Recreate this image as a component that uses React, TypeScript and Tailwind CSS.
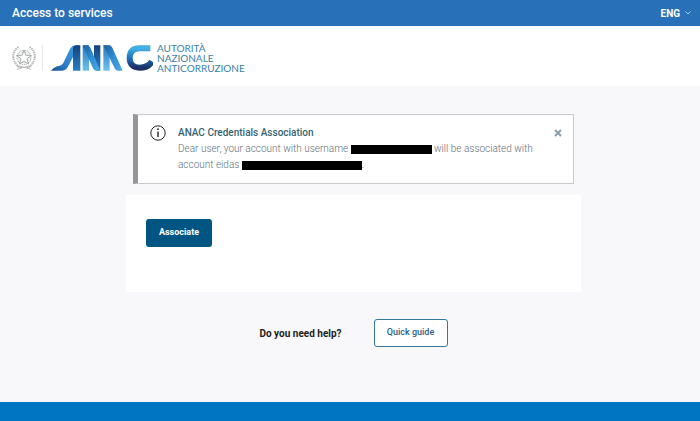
import React, { useState } from "react";

function Emblem() {
  return (
    <svg viewBox="0 0 48 52" className="h-[26px] w-6" fill="none" stroke="#b4b6b8" aria-hidden="true">
      <circle cx="24" cy="25" r="14" strokeWidth="2.5" strokeDasharray="2 1.4" />
      <circle cx="24" cy="25" r="10.5" strokeWidth="1" />
      <path
        d="M24 10l3.6 10.6 11.2.2-9 6.7 3.3 10.7-9.1-6.4-9.1 6.4 3.3-10.7-9-6.7 11.2-.2z"
        fill="#fff"
        stroke="#96999c"
        strokeWidth="1.6"
      />
      <path d="M13 4C3 10 0 21 4 31s9 12 15 15" strokeWidth="4" strokeDasharray="3 1.5" />
      <path d="M35 4c10 6 13 17 9 27s-9 12-15 15" strokeWidth="4" strokeDasharray="3 1.5" />
      <path d="M10 43c8 0 20 2 28 6M38 43c-8 0-20 2-28 6" strokeWidth="2" />
    </svg>
  );
}

// folded ribbon mark
function Ribbon() {
  return (
    <svg viewBox="0 0 306 78" className="h-[26px] w-[102px]" fill="none" role="img" aria-label="ANAC">
      <defs>
        <linearGradient id="sky" x1="0" y1="0" x2="0" y2="1">
          <stop offset="0" stopColor="#2a78bd" />
          <stop offset="1" stopColor="#6cc2f0" />
        </linearGradient>
        <linearGradient id="deep" x1="0" y1="0" x2="0" y2="1">
          <stop offset="0" stopColor="#16407e" />
          <stop offset="1" stopColor="#2580c6" />
        </linearGradient>
        <linearGradient id="tail" x1="1" y1="0" x2="0" y2="1">
          <stop offset="0" stopColor="#3f9fdd" />
          <stop offset="0.6" stopColor="#2c82c9" />
          <stop offset="1" stopColor="#1d4f92" />
        </linearGradient>
        <linearGradient id="fold" x1="0" y1="0" x2="1" y2="1">
          <stop offset="0" stopColor="#1d5da3" />
          <stop offset="0.5" stopColor="#2f8fd4" />
          <stop offset="1" stopColor="#4aa9e2" />
        </linearGradient>
        <linearGradient id="arc" x1="0" y1="0" x2="0" y2="1">
          <stop offset="0" stopColor="#41b0e2" />
          <stop offset="0.5" stopColor="#1f73ba" />
          <stop offset="1" stopColor="#1c2f66" />
        </linearGradient>
      </defs>
      <path d="M0 77q13-14 24-14 8-1 13-9L58 10q6-9 16-9h10L52 63q-7 14-18 14z" fill="url(#tail)" />
      <path d="M66 10q2-9 10-9h12v76H66z" fill="url(#deep)" />
      <path d="M95 1h19v76H95z" fill="url(#sky)" />
      <path d="M129 1h19v76h-11l-8-17z" fill="url(#deep)" />
      <path d="M95 1h13q7 0 10 7l30 69h-13q-6 0-9-7z" fill="url(#fold)" />
      <path d="M157 1h19v76h-19z" fill="url(#sky)" />
      <path d="M157 1h16q8 0 11 7l31 69h-14q-7 0-10-7z" fill="url(#fold)" />
      <path d="M298 10H266c-19 0-30 9-30 29 0 19 11 29 29 29 17 0 29-3 38-19" stroke="url(#arc)" strokeWidth="18" />
    </svg>
  );
}

function App() {
  const [open, setOpen] = useState(true);

  return (
    <div className="flex min-h-screen flex-col bg-[#f8f8fb] font-['Roboto',sans-serif]">
      <div className="flex h-[26px] items-center justify-between bg-[#2870b8] pr-2 pl-3 text-white">
        <span className="text-xs font-medium">Access to services</span>
        <button className="flex items-center gap-1 text-[10px] font-bold">
          ENG
          <svg viewBox="0 0 8 8" className="size-2" fill="none" stroke="#9fc8ea" aria-hidden="true">
            <path d="M1.5 2.5L4 5l2.500-2.500" />
          </svg>
        </button>
      </div>

      <header className="flex h-[60px] items-center bg-white pt-1 pl-3">
        <Emblem />
        <div className="mr-2 ml-[6px] h-[26px] border-l border-gray-200" />
        <Ribbon />
        <div className="ml-1 font-['Lato',sans-serif] text-[10px] leading-[10px] text-[#3a7fa5]">
          <p>AUTORITÀ</p>
          <p>NAZIONALE</p>
          <p>ANTICORRUZIONE</p>
        </div>
      </header>

      <main className="mr-[17%] ml-[18%] flex-1 pt-7">
        {open && (
          <div className="mx-[7px] mb-[11px] flex h-[70px] border border-l-5 border-[#c9c9ce] border-l-[#96969a] bg-white pt-[10px] pr-[7px] pl-3">
            <svg viewBox="0 0 16 16" className="size-4 shrink-0" fill="none" stroke="#222" aria-hidden="true">
              <circle cx="8" cy="8" r="7.2" />
              <path d="M8 6.500v5.500" strokeWidth="1.400" />
              <circle cx="8" cy="4.200" r="0.900" fill="#222" stroke="none" />
            </svg>
            <div className="ml-3 flex-1 text-[10px] leading-4 text-[#5f6f7c]">
              <h2 className="font-medium text-[#356472]">ANAC Credentials Association</h2>
              <p className="font-light">
                Dear user, your account with username{" "}
                <span className="inline-block h-[9px] w-[81px] bg-black align-middle" /> will be associated with
                <br />
                account eidas <span className="inline-block h-[9px] w-[120px] bg-black align-middle" />.
              </p>
            </div>
            <button
              aria-label="Close"
              onClick={() => setOpen(false)}
              className="flex size-4 items-center justify-center self-start"
            >
              <svg viewBox="0 0 8 8" className="size-2" stroke="#8b9faa" strokeWidth="2">
                <path d="M1 1l6 6M7 1L1 7" />
              </svg>
            </button>
          </div>
        )}

        <div className="h-[97px] bg-white px-5 pt-6">
          <button className="block h-7 w-[66px] rounded-[3px] bg-[#005583] text-[9px] font-bold text-white">
            Associate
          </button>
        </div>

        <div className="mt-[27px] flex items-center justify-center gap-8">
          <p className="text-[10px] font-bold text-[#1c1d20]">Do you need help?</p>
          <a
            href="#guide"
            className="flex h-7 w-[74px] items-center justify-center rounded-[3px] border border-[#34789d] bg-white text-[9px] font-medium text-[#2c6186]"
          >
            Quick guide
          </a>
        </div>
      </main>

      <footer className="h-[19px] bg-[#0075c1]" />
    </div>
  );
}

export default App;
